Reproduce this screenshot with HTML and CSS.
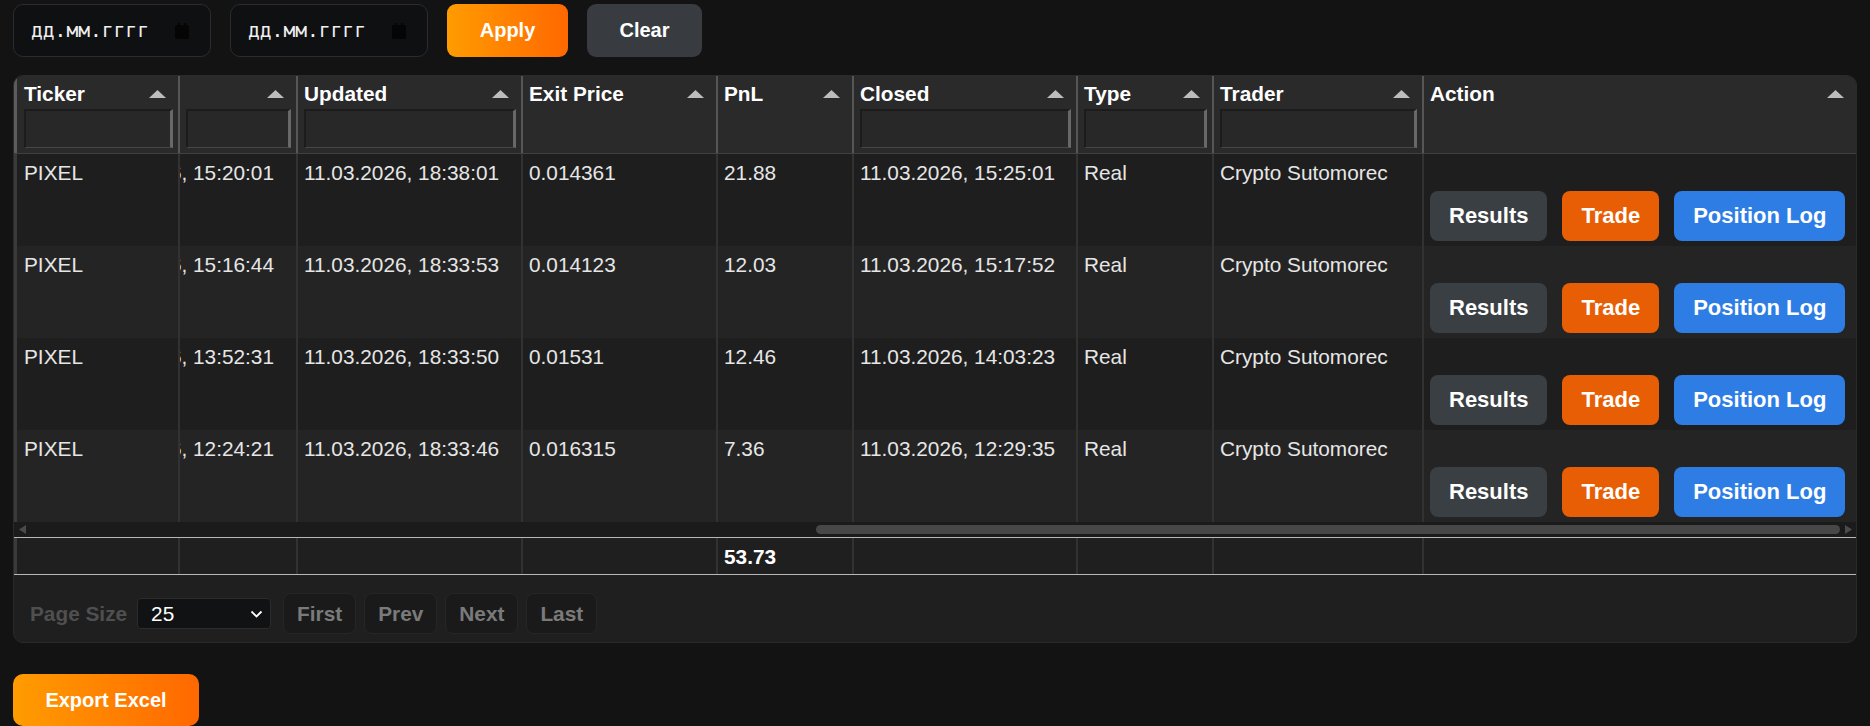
FILE: index.html
```html
<!DOCTYPE html>
<html lang="en">
<head>
    <meta charset="UTF-8">
    <meta name="viewport" content="width=device-width, initial-scale=1.0">
    <title>Closed Positions</title>
    <link rel="stylesheet" href="styles.css">
</head>
<body>
    <div class="toolbar">
        <div class="date-input">
            <span>дд.мм.гггг</span>
            <svg width="14" height="16" viewBox="0 0 14 16"><path d="M3 0h2v2h4V0h2v2h1.5A1.5 1.5 0 0 1 14 3.5v11a1.5 1.5 0 0 1-1.5 1.5h-11A1.5 1.5 0 0 1 0 14.5v-11A1.5 1.5 0 0 1 1.5 2H3z" fill="#050506"/></svg>
        </div>
        <div class="date-input">
            <span>дд.мм.гггг</span>
            <svg width="14" height="16" viewBox="0 0 14 16"><path d="M3 0h2v2h4V0h2v2h1.5A1.5 1.5 0 0 1 14 3.5v11a1.5 1.5 0 0 1-1.5 1.5h-11A1.5 1.5 0 0 1 0 14.5v-11A1.5 1.5 0 0 1 1.5 2H3z" fill="#050506"/></svg>
        </div>
        <button class="btn btn-apply">Apply</button>
        <button class="btn btn-clear">Clear</button>
    </div>

    <div class="grid">
        <div class="grid-row grid-head">
            <div class="cell first">
                <div class="cell-title">Ticker <svg class="sort" width="17" height="8" viewBox="0 0 17 8"><polygon points="0,8 8.5,0 17,8"/></svg></div>
                <div class="filter"></div>
            </div>
            <div class="cell">
                <div class="cell-title"><span></span><svg class="sort" width="17" height="8" viewBox="0 0 17 8"><polygon points="0,8 8.5,0 17,8"/></svg></div>
                <div class="filter"></div>
            </div>
            <div class="cell">
                <div class="cell-title">Updated <svg class="sort" width="17" height="8" viewBox="0 0 17 8"><polygon points="0,8 8.5,0 17,8"/></svg></div>
                <div class="filter"></div>
            </div>
            <div class="cell">
                <div class="cell-title">Exit Price <svg class="sort" width="17" height="8" viewBox="0 0 17 8"><polygon points="0,8 8.5,0 17,8"/></svg></div>
            </div>
            <div class="cell">
                <div class="cell-title">PnL <svg class="sort" width="17" height="8" viewBox="0 0 17 8"><polygon points="0,8 8.5,0 17,8"/></svg></div>
            </div>
            <div class="cell">
                <div class="cell-title">Closed <svg class="sort" width="17" height="8" viewBox="0 0 17 8"><polygon points="0,8 8.5,0 17,8"/></svg></div>
                <div class="filter"></div>
            </div>
            <div class="cell">
                <div class="cell-title">Type <svg class="sort" width="17" height="8" viewBox="0 0 17 8"><polygon points="0,8 8.5,0 17,8"/></svg></div>
                <div class="filter"></div>
            </div>
            <div class="cell">
                <div class="cell-title">Trader <svg class="sort" width="17" height="8" viewBox="0 0 17 8"><polygon points="0,8 8.5,0 17,8"/></svg></div>
                <div class="filter"></div>
            </div>
            <div class="cell">
                <div class="cell-title">Action <svg class="sort" width="17" height="8" viewBox="0 0 17 8"><polygon points="0,8 8.5,0 17,8"/></svg></div>
            </div>
        </div>

        <div class="grid-row body-row odd">
            <div class="cell first">PIXEL</div>
            <div class="cell cut"><span>11.03.2026, 15:20:01</span></div>
            <div class="cell">11.03.2026, 18:38:01</div>
            <div class="cell">0.014361</div>
            <div class="cell">21.88</div>
            <div class="cell">11.03.2026, 15:25:01</div>
            <div class="cell">Real</div>
            <div class="cell">Crypto Sutomorec</div>
            <div class="cell actions">
                <button class="action-btn results">Results</button>
                <button class="action-btn trade">Trade</button>
                <button class="action-btn log">Position Log</button>
            </div>
        </div>
        <div class="grid-row body-row even">
            <div class="cell first">PIXEL</div>
            <div class="cell cut"><span>11.03.2026, 15:16:44</span></div>
            <div class="cell">11.03.2026, 18:33:53</div>
            <div class="cell">0.014123</div>
            <div class="cell">12.03</div>
            <div class="cell">11.03.2026, 15:17:52</div>
            <div class="cell">Real</div>
            <div class="cell">Crypto Sutomorec</div>
            <div class="cell actions">
                <button class="action-btn results">Results</button>
                <button class="action-btn trade">Trade</button>
                <button class="action-btn log">Position Log</button>
            </div>
        </div>
        <div class="grid-row body-row odd">
            <div class="cell first">PIXEL</div>
            <div class="cell cut"><span>11.03.2026, 13:52:31</span></div>
            <div class="cell">11.03.2026, 18:33:50</div>
            <div class="cell">0.01531</div>
            <div class="cell">12.46</div>
            <div class="cell">11.03.2026, 14:03:23</div>
            <div class="cell">Real</div>
            <div class="cell">Crypto Sutomorec</div>
            <div class="cell actions">
                <button class="action-btn results">Results</button>
                <button class="action-btn trade">Trade</button>
                <button class="action-btn log">Position Log</button>
            </div>
        </div>
        <div class="grid-row body-row even">
            <div class="cell first">PIXEL</div>
            <div class="cell cut"><span>11.03.2026, 12:24:21</span></div>
            <div class="cell">11.03.2026, 18:33:46</div>
            <div class="cell">0.016315</div>
            <div class="cell">7.36</div>
            <div class="cell">11.03.2026, 12:29:35</div>
            <div class="cell">Real</div>
            <div class="cell">Crypto Sutomorec</div>
            <div class="cell actions">
                <button class="action-btn results">Results</button>
                <button class="action-btn trade">Trade</button>
                <button class="action-btn log">Position Log</button>
            </div>
        </div>

        <div class="hscroll">
            <svg width="7" height="9" viewBox="0 0 7 9"><polygon points="7,0 0,4.5 7,9"/></svg>
            <div class="thumb"></div>
            <svg class="arrow-right" width="7" height="9" viewBox="0 0 7 9"><polygon points="0,0 7,4.5 0,9"/></svg>
        </div>

        <div class="grid-row totals">
            <div class="cell first"></div>
            <div class="cell"></div>
            <div class="cell"></div>
            <div class="cell"></div>
            <div class="cell total">53.73</div>
            <div class="cell"></div>
            <div class="cell"></div>
            <div class="cell"></div>
            <div class="cell"></div>
        </div>

        <div class="pager">
            <span class="page-size">Page Size</span>
            <div class="select">
                <span>25</span>
                <svg width="13" height="8" viewBox="0 0 13 8"><polyline points="1.5,1.5 6.5,6.5 11.5,1.5" fill="none" stroke="#fff" stroke-width="1.8"/></svg>
            </div>
            <button class="pager-btn">First</button>
            <button class="pager-btn">Prev</button>
            <button class="pager-btn">Next</button>
            <button class="pager-btn">Last</button>
        </div>
    </div>

    <button class="btn btn-export">Export Excel</button>
</body>
</html>
```

FILE: styles.css
```css
* {
    box-sizing: border-box;
}

body {
    margin: 0;
    padding: 4px 13px;
    background-color: #131313;
    font-family: 'Liberation Sans', Arial, sans-serif;
    font-size: 20.8px;
    color: #e6e6e6;
}

.toolbar {
    display: flex;
    gap: 19px;
    height: 53px;
}

.date-input {
    width: 198px;
    display: flex;
    align-items: center;
    justify-content: space-between;
    padding: 0 21px 0 17px;
    background-color: #0f1012;
    border: 1px solid #2a2c30;
    border-radius: 10px;
    font-family: 'DejaVu Sans Mono', monospace;
    font-size: 19.6px;
    color: #f0f0f0;
}

.btn {
    border: none;
    border-radius: 9px;
    font-family: 'Liberation Sans', Arial, sans-serif;
    font-weight: bold;
    font-size: 20px;
    color: #fff;
    cursor: pointer;
}

.btn-apply {
    width: 121px;
    background: linear-gradient(90deg, #ff9c00, #ff6800);
}

.btn-clear {
    width: 115px;
    background-color: #383c41;
}

.btn-export {
    display: block;
    width: 186px;
    height: 52px;
    margin-top: 31px;
    border-radius: 10px;
    background: linear-gradient(90deg, #ff9c00, #ff6800);
}

/* data grid */
.grid {
    margin-top: 18px;
    background-color: #1f1f1f;
    border: 1px solid #2a2a2a;
    border-radius: 10px;
    overflow: hidden;
}

.grid-row {
    display: grid;
    grid-template-columns: 164px 118px 225px 195px 136px 224px 136px 210px 1fr;
}

.grid-head {
    background-color: #2a2a2a;
    border-bottom: 1px solid #404040;
}

.grid-head .cell {
    padding: 6px 5px 5px 6px;
    border-left: 2px solid #565656;
}

.grid-head .cell.first {
    border-left: 3px solid #5c5c5c;
    padding-left: 7px;
}

.cell-title {
    display: flex;
    justify-content: space-between;
    align-items: center;
    height: 24px;
    padding-right: 7px;
    font-weight: bold;
    color: #fff;
}

.sort {
    fill: #bdbdbd;
}

.filter {
    height: 39px;
    margin-top: 3px;
    background-color: #282828;
    border-style: solid;
    border-width: 2px 3px 1px 2px;
    border-color: #1c1c1c #686868 #474747 #1c1c1c;
}

.body-row .cell,
.totals .cell {
    padding: 7px 6px 0;
    border-left: 2px solid #323232;
    line-height: 24px;
    white-space: nowrap;
    overflow: hidden;
}

.body-row .cell.first,
.totals .cell.first {
    border-left: 3px solid #3a3a3a;
    padding-left: 7px;
}

.odd {
    background-color: #1e1e1e;
}

.even {
    background-color: #242424;
}

/* column scrolled under the pinned ticker column */
.cell.cut {
    display: flex;
    justify-content: flex-end;
    padding-right: 22px;
}

.cell.cut span {
    flex-shrink: 0;
}

.cell.actions {
    display: flex;
    gap: 15px;
    padding: 37px 6px 5px;
}

.action-btn {
    height: 50px;
    padding: 0 19px;
    border: none;
    border-radius: 8px;
    font-family: 'Liberation Sans', Arial, sans-serif;
    font-weight: bold;
    font-size: 22px;
    color: #fff;
    cursor: pointer;
}

.results {
    background-color: #3a3f44;
}

.trade {
    background-color: #e85e05;
}

.log {
    background-color: #2d7de5;
}

.hscroll {
    display: flex;
    align-items: center;
    height: 15px;
    padding: 0 4px 0 5px;
    background-color: #1b1b1b;
    fill: #4b4b4b;
}

.thumb {
    width: 1024px;
    height: 9px;
    margin-left: auto;
    border-radius: 5px;
    background-color: #474747;
}

.arrow-right {
    margin-left: 5px;
}

.totals {
    background-color: #1f1f1f;
    border-top: 1px solid #b8b8b8;
    border-bottom: 1px solid #b8b8b8;
}

.totals .cell {
    height: 36px;
}

.totals .total {
    font-weight: bold;
    color: #fff;
}

.pager {
    display: flex;
    align-items: center;
    gap: 8px;
    padding: 18px 0 8px 16px;
}

.page-size {
    margin-right: 2px;
    font-weight: bold;
    color: #4f4f4f;
}

.select {
    width: 134px;
    height: 31px;
    margin-right: 4px;
    display: flex;
    align-items: center;
    justify-content: space-between;
    padding: 0 7px 0 13px;
    background-color: #111214;
    border: 1px solid #2c2c2c;
    border-radius: 4px;
    color: #fff;
}

.pager-btn {
    height: 41px;
    padding: 0 13px;
    background-color: #1a1a1a;
    border: 1px solid #262626;
    border-radius: 8px;
    font-family: 'Liberation Sans', Arial, sans-serif;
    font-weight: bold;
    font-size: 20.8px;
    color: #7a7a7a;
}
```
